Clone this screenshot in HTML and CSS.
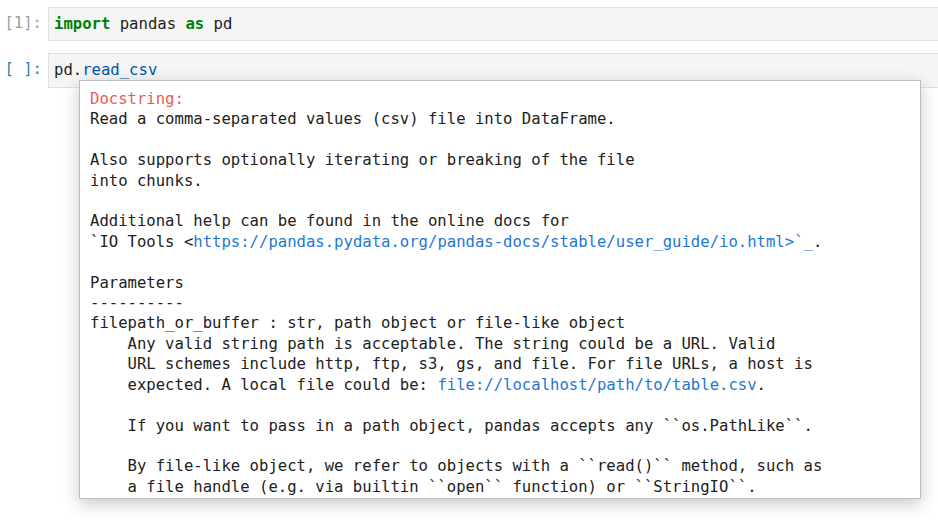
FILE: index.html
```html
<!DOCTYPE html>
<html>
<head>
<meta charset="utf-8">
<link rel="stylesheet" href="styles.css">
</head>
<body>
<div class="notebook">
  <div class="cell">
    <div class="prompt">[1]:</div>
    <div class="input"><span class="kw">import</span> pandas <span class="kw">as</span> pd</div>
  </div>
  <div class="cell">
    <div class="prompt active">[ ]:</div>
    <div class="input">pd.<span class="prop">read_csv</span></div>
  </div>
</div>
<div class="tooltip"><pre class="doc"><span class="head">Docstring:</span>
Read a comma-separated values (csv) file into DataFrame.

Also supports optionally iterating or breaking of the file
into chunks.

Additional help can be found in the online docs for
`IO Tools &lt;<span class="link">https://pandas.pydata.org/pandas-docs/stable/user_guide/io.html&gt;`_</span>.

Parameters
----------
filepath_or_buffer : str, path object or file-like object
    Any valid string path is acceptable. The string could be a URL. Valid
    URL schemes include http, ftp, s3, gs, and file. For file URLs, a host is
    expected. A local file could be: <span class="link">file://localhost/path/to/table.csv</span>.

    If you want to pass in a path object, pandas accepts any ``os.PathLike``.

    By file-like object, we refer to objects with a ``read()`` method, such as
    a file handle (e.g. via builtin ``open`` function) or ``StringIO``.</pre></div>
</body>
</html>
```
FILE: styles.css
```css
html, body {
  margin: 0;
  padding: 0;
  background: #ffffff;
  overflow: hidden;
  height: 100%;
}
body {
  font-family: "DejaVu Sans Mono", "Liberation Mono", monospace;
  font-size: 15.6px;
  line-height: 20.4px;
  color: #212121;
}
.notebook {
  display: flex;
  flex-direction: column;
  gap: 12px;
  padding-top: 7px;
}
.cell {
  display: flex;
  align-items: flex-start;
}
.prompt {
  width: 42px;
  padding-right: 6px;
  text-align: right;
  color: #9e9e9e;
  padding-top: 6px;
  flex: none;
}
.prompt.active {
  color: #307fc1;
}
.input {
  flex: 1;
  background: #f5f5f5;
  border: 1px solid #e0e0e0;
  border-right: none;
  padding: 6px 5px 6px 5px;
  white-space: pre;
}
.kw {
  color: #008000;
  font-weight: bold;
}
.prop {
  color: #0055aa;
}
.tooltip {
  position: absolute;
  left: 79px;
  top: 80px;
  width: 830px;
  height: 404px;
  padding: 8px 0 5px 10px;
  background: #ffffff;
  border: 1px solid #bdbdbd;
  box-shadow: 0 5px 16px rgba(0, 0, 0, 0.22);
  overflow: hidden;
}
.doc {
  margin: 0;
  font: inherit;
  color: #212121;
}
.head {
  color: #e75c58;
}
.link {
  color: #1e77d3;
}
```
